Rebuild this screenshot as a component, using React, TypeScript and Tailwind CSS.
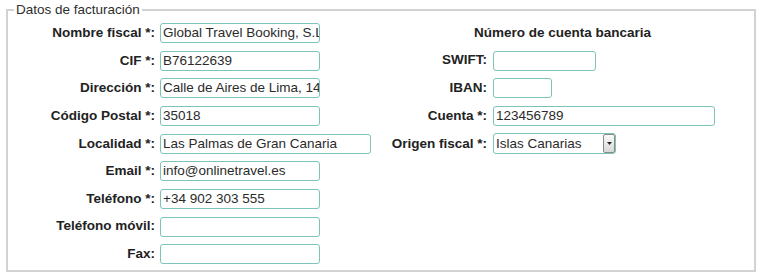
import React from 'react'

const leftRows: [string, string, string][] = [
  ['Nombre fiscal *:', 'Global Travel Booking, S.L.', 'w-[160px]'],
  ['CIF *:', 'B76122639', 'w-[160px]'],
  ['Dirección *:', 'Calle de Aires de Lima, 14', 'w-[160px]'],
  ['Código Postal *:', '35018', 'w-[160px]'],
  ['Localidad *:', 'Las Palmas de Gran Canaria', 'w-[211px]'],
  ['Email *:', 'info@onlinetravel.es', 'w-[160px]'],
  ['Teléfono *:', '+34 902 303 555', 'w-[160px]'],
  ['Teléfono móvil:', '', 'w-[160px]'],
  ['Fax:', '', 'w-[160px]'],
]

const rightRows: [string, string, string][] = [
  ['SWIFT:', '', 'w-[103px]'],
  ['IBAN:', '', 'w-[59px]'],
  ['Cuenta *:', '123456789', 'w-[222px]'],
]

const inputClass =
  'h-[20px] rounded-[3px] border border-[#7cc4b8] bg-white pl-[2px] pr-0 text-[13.5px] text-[#2b2b2b] outline-none'

const Field = ({ value, width }: { value: string; width: string }) => (
  <input className={`${inputClass} ${width}`} defaultValue={value} />
)

export default function App() {
  return (
    <div
      className="w-[764px] h-[280px] bg-white px-[6px] pt-[2px] text-[13.5px] text-[#222]"
      style={{ fontFamily: '"Liberation Sans", Arial, sans-serif' }}
    >
      <fieldset className="w-[750px] h-[270px] border-2 border-[#d2d2d2] px-0 pt-[5px]">
        <legend className="ml-[6px] px-[2px] text-[#2e2e2e] leading-[16px]">
          Datos de facturación
        </legend>

        <div className="flex">
          <div className="grid grid-cols-[147px_auto] gap-x-[5px] gap-y-[7.375px] items-center">
            {leftRows.map(([label, value, width]) => (
              <React.Fragment key={label}>
                <label className="text-right font-bold">{label}</label>
                <div>
                  <Field value={value} width={width} />
                </div>
              </React.Fragment>
            ))}
          </div>

          <div className="flex-1 grid grid-cols-[116px_auto] gap-x-[6px] gap-y-[7.375px] items-start content-start">
            <div className="col-span-2 h-[20px] flex items-center justify-center font-bold">
              Número de cuenta bancaria
            </div>
            {rightRows.map(([label, value, width]) => (
              <React.Fragment key={label}>
                <label className="h-[20px] flex items-center justify-end font-bold">
                  {label}
                </label>
                <div>
                  <Field value={value} width={width} />
                </div>
              </React.Fragment>
            ))}
            <label className="h-[21px] flex items-center justify-end font-bold">
              Origen fiscal *:
            </label>
            <div className="w-[123px] h-[21px] flex rounded-[3px] border border-[#7cc4b8] bg-white">
              <select className="flex-1 min-w-0 appearance-none bg-transparent pl-[2px] text-[13.5px] text-[#2b2b2b] outline-none">
                <option>Islas Canarias</option>
              </select>
              <div className="w-[12px] flex items-center justify-center border border-[#8a8a8a] rounded-[2px] bg-gradient-to-b from-[#fafafa] to-[#d8d8d8]">
                <svg width="5" height="3" viewBox="0 0 5 3">
                  <path d="M0 0h5L2.5 3z" fill="#222" />
                </svg>
              </div>
            </div>
          </div>
        </div>
      </fieldset>
    </div>
  )
}
